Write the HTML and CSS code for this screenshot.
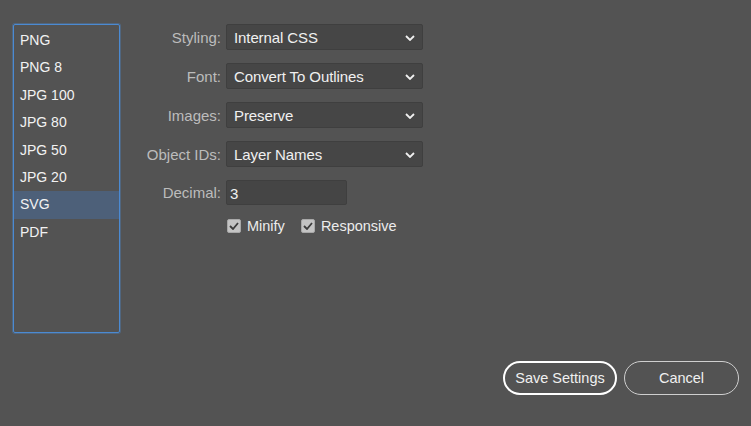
FILE: index.html
```html
<!DOCTYPE html>
<html>
<head>
    <link rel="stylesheet" href="styles.css">
</head>
<body>
    <div class="dialog">
        <div class="main">
            <ul class="format-list">
                <li>PNG</li>
                <li>PNG 8</li>
                <li>JPG 100</li>
                <li>JPG 80</li>
                <li>JPG 50</li>
                <li>JPG 20</li>
                <li class="selected">SVG</li>
                <li>PDF</li>
            </ul>

            <div class="options">
                <div class="opt-row">
                    <span class="opt-label">Styling:</span>
                    <div class="select">Internal CSS
                        <svg class="chevron" width="10" height="6" viewBox="0 0 10 6"><path d="M1 1 L5 5 L9 1" fill="none" stroke="#f0f0f0" stroke-width="1.8"/></svg>
                    </div>
                </div>
                <div class="opt-row">
                    <span class="opt-label">Font:</span>
                    <div class="select">Convert To Outlines
                        <svg class="chevron" width="10" height="6" viewBox="0 0 10 6"><path d="M1 1 L5 5 L9 1" fill="none" stroke="#f0f0f0" stroke-width="1.8"/></svg>
                    </div>
                </div>
                <div class="opt-row">
                    <span class="opt-label">Images:</span>
                    <div class="select">Preserve
                        <svg class="chevron" width="10" height="6" viewBox="0 0 10 6"><path d="M1 1 L5 5 L9 1" fill="none" stroke="#f0f0f0" stroke-width="1.8"/></svg>
                    </div>
                </div>
                <div class="opt-row">
                    <span class="opt-label">Object IDs:</span>
                    <div class="select">Layer Names
                        <svg class="chevron" width="10" height="6" viewBox="0 0 10 6"><path d="M1 1 L5 5 L9 1" fill="none" stroke="#f0f0f0" stroke-width="1.8"/></svg>
                    </div>
                </div>
                <div class="opt-row decimal-row">
                    <span class="opt-label">Decimal:</span>
                    <div class="text-input">3</div>
                </div>
                <div class="check-row">
                    <span class="check">
                        <span class="box"><svg width="10" height="8" viewBox="0 0 10 8"><path d="M1 4 L4 7 L9 1" fill="none" stroke="#3d3d3d" stroke-width="1.8"/></svg></span>
                        Minify
                    </span>
                    <span class="check">
                        <span class="box"><svg width="10" height="8" viewBox="0 0 10 8"><path d="M1 4 L4 7 L9 1" fill="none" stroke="#3d3d3d" stroke-width="1.8"/></svg></span>
                        Responsive
                    </span>
                </div>
            </div>
        </div>

        <div class="footer">
            <button class="btn btn-primary">Save Settings</button>
            <button class="btn">Cancel</button>
        </div>
    </div>
</body>
</html>
```

FILE: styles.css
```css
body {
    margin: 0;
    background: #535353;
    font-family: "Liberation Sans", Arial, sans-serif;
    font-size: 14px;
    color: #f0f0f0;
}

.dialog {
    height: 426px;
    box-sizing: border-box;
    padding: 24px 12px 0 13px;
    display: flex;
    flex-direction: column;
}

.main {
    display: flex;
}

.format-list {
    list-style: none;
    margin: 0;
    padding: 2px 0 0;
    width: 107px;
    height: 309px;
    box-sizing: border-box;
    border: 1px solid #4b8ad2;
    border-radius: 2px;
    box-shadow: 0 0 0 1px rgba(75, 138, 210, 0.35);
}

.format-list li {
    height: 27.4px;
    line-height: 27.4px;
    padding-left: 6px;
    color: #f2f2f2;
}

.format-list li.selected {
    background: #4d6079;
}

.options {
    width: 310px;
    margin-left: 11px;
    font-size: 15px;
}

.opt-row {
    display: flex;
    align-items: center;
    margin-bottom: 13px;
}

.opt-label {
    width: 90px;
    text-align: right;
    margin-right: 5px;
    color: #bcbcbc;
}

.select {
    position: relative;
    width: 197px;
    height: 26px;
    line-height: 26px;
    box-sizing: border-box;
    padding-left: 7px;
    background: #464646;
    border: 1px solid #3f3f3f;
    border-radius: 2px;
    letter-spacing: -0.1px;
}

.chevron {
    position: absolute;
    right: 7px;
    top: 10px;
}

.decimal-row {
    margin-bottom: 13px;
}

.text-input {
    width: 121px;
    height: 25px;
    line-height: 25px;
    box-sizing: border-box;
    padding-left: 3px;
    background: #454545;
    border: 1px solid #3f3f3f;
    border-radius: 2px;
}

.check-row {
    display: flex;
    gap: 16px;
    padding-left: 96px;
    font-size: 14.5px;
}

.check {
    display: flex;
    align-items: center;
    color: #ececec;
}

.box {
    width: 14px;
    height: 14px;
    box-sizing: border-box;
    margin-right: 6px;
    background: #c4c4c4;
    border: 1px solid #a8a8a8;
    border-radius: 2px;
    display: flex;
    align-items: center;
    justify-content: center;
}

.footer {
    display: flex;
    justify-content: flex-end;
    gap: 7px;
    margin-top: 28px;
}

.btn {
    width: 115px;
    height: 34px;
    border-radius: 17px;
    background: transparent;
    border: 1.5px solid #cfcfcf;
    color: #f0f0f0;
    font-family: "Liberation Sans", Arial, sans-serif;
    font-size: 14.5px;
    cursor: pointer;
}

.btn-primary {
    width: 114px;
    border: 2px solid #ffffff;
}
```
